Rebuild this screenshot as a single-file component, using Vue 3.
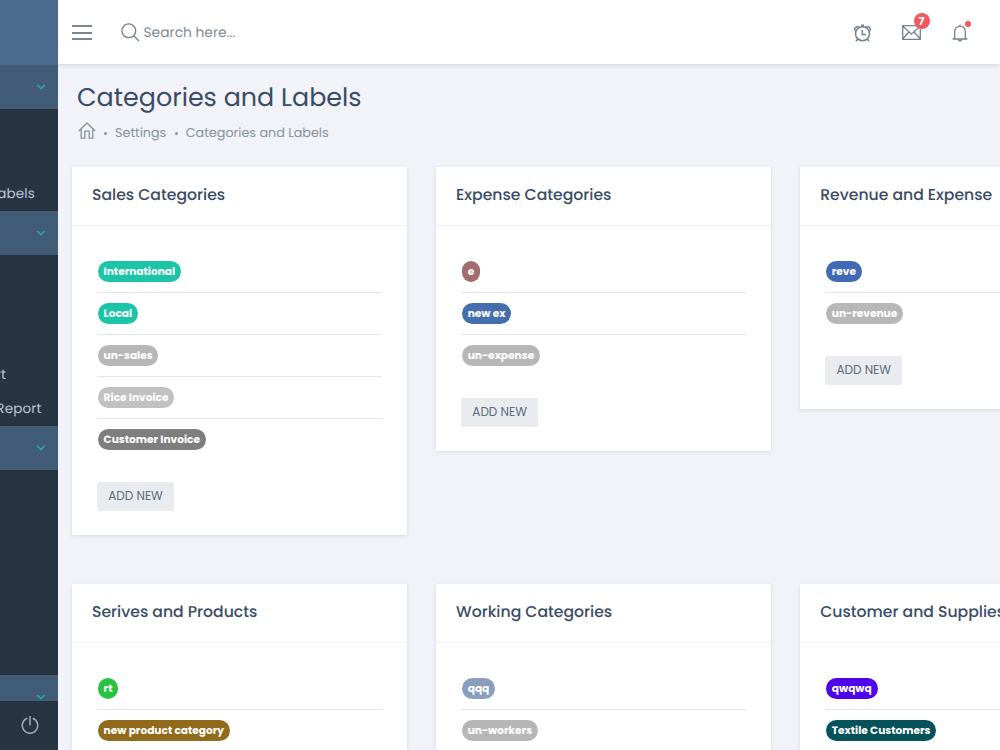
<template>
  <div class="app">
    <aside class="sidebar">
      <div class="brand"></div>
      <template v-for="(group, i) in menu" :key="i">
        <div class="menu-head" :class="{ last: group.last }">
          <svg width="10" height="6" viewBox="0 0 10 6">
            <path d="M1.2 1 L5 4.7 L8.8 1" />
          </svg>
        </div>
        <div class="menu-items" :class="'group-' + i">
          <span v-for="item in group.items" :key="item.label" :style="{ paddingRight: item.inset + 'px' }">{{ item.label }}</span>
        </div>
      </template>
      <div class="side-footer">
        <svg width="18" height="20" viewBox="0 0 18 20">
          <path d="M6.2 3.3 A7.7 7.7 0 1 0 11.8 3.3 M9 1 V10.5" />
        </svg>
      </div>
    </aside>

    <div class="main">
      <header class="topbar">
        <div class="burger"><i></i><i></i><i></i></div>
        <div class="search">
          <svg width="19" height="19" viewBox="0 0 19 19">
            <circle cx="7.8" cy="7.8" r="6.9" />
            <path d="M12.7 12.7 L18 18" />
          </svg>
          <span>Search here...</span>
        </div>
        <div class="actions">
          <svg class="clock" width="17" height="18" viewBox="0 0 17 18">
            <circle cx="8.5" cy="9.7" r="7" />
            <path d="M8.3 6 V10.4 H12 M7 1.2 H10 M8.5 1.2 V3 M3.7 15 L2 17.3 M13.3 15 L15 17.3" />
            <path d="M1.2 6.8 C-.2 4.3 2 1.7 5.6 3.3 M15.8 6.8 C17.2 4.3 15 1.7 11.4 3.3" />
          </svg>
          <div class="mail">
            <svg width="19" height="15" viewBox="0 0 19 15">
              <path d="M.7 .7 H18.3 V14.3 H.7 Z M.7 1 L9.5 9.2 L18.3 1 M.7 14 L6.8 7 M18.3 14 L12.2 7" />
            </svg>
            <b>7</b>
          </div>
          <div class="bell">
            <svg width="16" height="18" viewBox="0 0 16 18">
              <path d="M.6 15 H15.4 M2.3 15 C3.2 13.5 2.6 11.5 2.6 8.3 C2.6 4.6 4.8 2.3 8 2.3 C11.2 2.3 13.4 4.6 13.4 8.3 C13.4 11.5 12.8 13.5 13.7 15 M8 .6 V2.3 M6.3 15.4 C6.6 17.3 9.4 17.3 9.7 15.4" />
            </svg>
            <b></b>
          </div>
        </div>
      </header>

      <h1>Categories and Labels</h1>
      <nav class="breadcrumb">
        <svg width="18" height="17" viewBox="0 0 18 17">
          <path d="M.8 9 L9 1 L17.2 9 M3.2 7.2 V16.1 H6.8 V9.2 H11.2 V16.1 H14.8 V7.2" />
        </svg>
        <i></i>
        <span>Settings</span>
        <i></i>
        <span>Categories and Labels</span>
      </nav>

      <div class="cards">
        <section v-for="card in cards" :key="card.title" class="card">
          <h2>{{ card.title }}</h2>
          <div class="card-body">
            <ul>
              <li v-for="label in card.labels" :key="label.name">
                <span class="badge" :style="{ background: label.color }">{{ label.name }}</span>
              </li>
            </ul>
            <button type="button">ADD NEW</button>
          </div>
        </section>
      </div>
    </div>
  </div>
</template>

<script setup>
const menu = [
  { items: [{ label: 'Labels', inset: 22.5 }] },
  { items: [{ label: 'Report', inset: 51.5 }, { label: 'Report', inset: 16 }] },
  { items: [] },
  { items: [], last: true }
]

const cards = [
  {
    title: 'Sales Categories',
    labels: [
      { name: 'International', color: '#1cc5a8' },
      { name: 'Local', color: '#1cc5a8' },
      { name: 'un-sales', color: '#b8b7b7' },
      { name: 'Rice Invoice', color: '#c1c1c1' },
      { name: 'Customer Invoice', color: '#7f7e7e' }
    ]
  },
  {
    title: 'Expense Categories',
    labels: [
      { name: 'e', color: '#a36d70' },
      { name: 'new ex', color: '#446eae' },
      { name: 'un-expense', color: '#b8b7b7' }
    ]
  },
  {
    title: 'Revenue and Expense',
    labels: [
      { name: 'reve', color: '#4169b5' },
      { name: 'un-revenue', color: '#b8b7b7' }
    ]
  },
  {
    title: 'Serives and Products',
    labels: [
      { name: 'rt', color: '#28c440' },
      { name: 'new product category', color: '#926a1c' }
    ]
  },
  {
    title: 'Working Categories',
    labels: [
      { name: 'qqq', color: '#8a9fbf' },
      { name: 'un-workers', color: '#b8b7b7' }
    ]
  },
  {
    title: 'Customer and Supplies',
    labels: [
      { name: 'qwqwq', color: '#4f03ea' },
      { name: 'Textile Customers', color: '#05525a' }
    ]
  }
]
</script>

<style>
body {
  overflow: hidden;
}
</style>

<style scoped>
.app {
  display: flex;
  width: 1000px;
  height: 750px;
  overflow: hidden;
  background: #f1f3f8;
  color: #3b4d66;
  font-family: Poppins, Inter, "Open Sans", sans-serif;
  text-rendering: geometricPrecision;
}

svg {
  display: block;
  flex: none;
  fill: none;
  stroke: #75818c;
  stroke-width: 1.3;
}

.sidebar {
  display: flex;
  flex-direction: column;
  flex: none;
  width: 57.5px;
  background: #273543;
  overflow: hidden;
}

.brand {
  height: 64.5px;
  background: #4d6b8f;
}

.menu-head {
  display: flex;
  align-items: center;
  justify-content: flex-end;
  box-sizing: border-box;
  height: 44px;
  padding-right: 11.5px;
  background: #425c78;
}

.menu-head svg {
  stroke: #2cb5a2;
  stroke-width: 1.3;
}

.menu-head.last {
  height: 26px;
  padding-top: 17px;
}

.menu-items {
  display: flex;
  flex-direction: column;
  justify-content: flex-end;
  align-items: flex-end;
}

.menu-items span {
  color: #c0c6d2;
  font-size: 13.5px;
  line-height: 34px;
  letter-spacing: .15px;
}

.group-0 {
  height: 102.5px;
}

.group-1 {
  height: 171px;
}

.group-2 {
  height: 205px;
}

.side-footer {
  display: flex;
  justify-content: center;
  height: 35px;
  padding: 14px 0 0 2px;
}

.side-footer svg {
  stroke: #a7abb9;
  stroke-width: 1.5;
}

.main {
  flex: none;
  width: 1130px;
}

.topbar {
  display: flex;
  align-items: center;
  box-sizing: border-box;
  width: 942.5px;
  height: 64px;
  padding: 0 32px 0 14.5px;
  background: #fff;
  box-shadow: 0 1px 4px rgba(70, 80, 100, .22);
}

.burger {
  display: flex;
  flex-direction: column;
  gap: 4.5px;
  width: 20px;
  margin-top: 1px;
}

.burger i {
  height: 2px;
  background: #7b8591;
}

.search {
  display: flex;
  align-items: center;
  gap: 4px;
  margin-left: 28.5px;
  color: #7e8993;
  font-size: 13.8px;
}

.search span {
  padding-top: 1.5px;
}

.actions {
  display: flex;
  align-items: center;
  gap: 31px;
  margin-left: auto;
  padding-top: 1px;
}

.mail,
.bell {
  position: relative;
}

.mail b {
  position: absolute;
  top: -12.5px;
  left: 11.5px;
  width: 16px;
  height: 16px;
  border-radius: 50%;
  background: #f4565f;
  color: #fff;
  font-size: 11px;
  line-height: 16px;
  text-align: center;
}

.bell b {
  position: absolute;
  top: -3px;
  right: -3px;
  width: 6px;
  height: 6px;
  border-radius: 50%;
  background: #f4565f;
}

.clock {
  stroke-width: 1.5;
}

h1 {
  margin: 14px 0 0 19.5px;
  font-size: 25.4px;
  font-weight: 400;
  line-height: 38px;
}

.breadcrumb {
  display: flex;
  align-items: center;
  height: 20px;
  margin: 7px 0 0 20px;
  color: #87929a;
  font-size: 12.75px;
}

.breadcrumb svg {
  margin-top: -6px;
  stroke: #87929a;
}

.breadcrumb span {
  padding-top: 1px;
}

.breadcrumb i {
  width: 3px;
  height: 3px;
  margin: 0 8px 0 8.5px;
  border-radius: 50%;
  background: #87929a;
}

.cards {
  display: grid;
  grid-template-columns: repeat(3, 335px);
  align-items: start;
  gap: 49px 29.1px;
  margin: 24px 0 0 14.5px;
}

.card {
  background: #fff;
  box-shadow: 0 1px 4px rgba(70, 80, 100, .16);
}

h2 {
  box-sizing: border-box;
  height: 58.5px;
  margin: 0;
  padding-left: 20px;
  border-bottom: 1px solid #f0f2f4;
  font-size: 15.65px;
  font-weight: 500;
  line-height: 58.5px;
  white-space: nowrap;
}

.card-body {
  padding: 25.5px 25px 24.5px;
}

ul {
  margin: 0;
  padding: 0;
  list-style: none;
}

li {
  display: flex;
  align-items: center;
  box-sizing: border-box;
  height: 42px;
  border-bottom: 1px solid #e3e7ea;
}

li:last-child {
  border-bottom-color: transparent;
}

.badge {
  height: 21px;
  margin-left: .8px;
  padding: 0 5.8px;
  border-radius: 10.5px;
  color: #fff;
  font-size: 10.6px;
  font-weight: 700;
  line-height: 21px;
  white-space: nowrap;
}

button {
  display: block;
  width: 77px;
  height: 29px;
  margin-top: 20.5px;
  padding: 0;
  border: 0;
  border-radius: 2px;
  background: #e9ebee;
  color: #5c6b7a;
  font: inherit;
  font-size: 12px;
}
</style>
